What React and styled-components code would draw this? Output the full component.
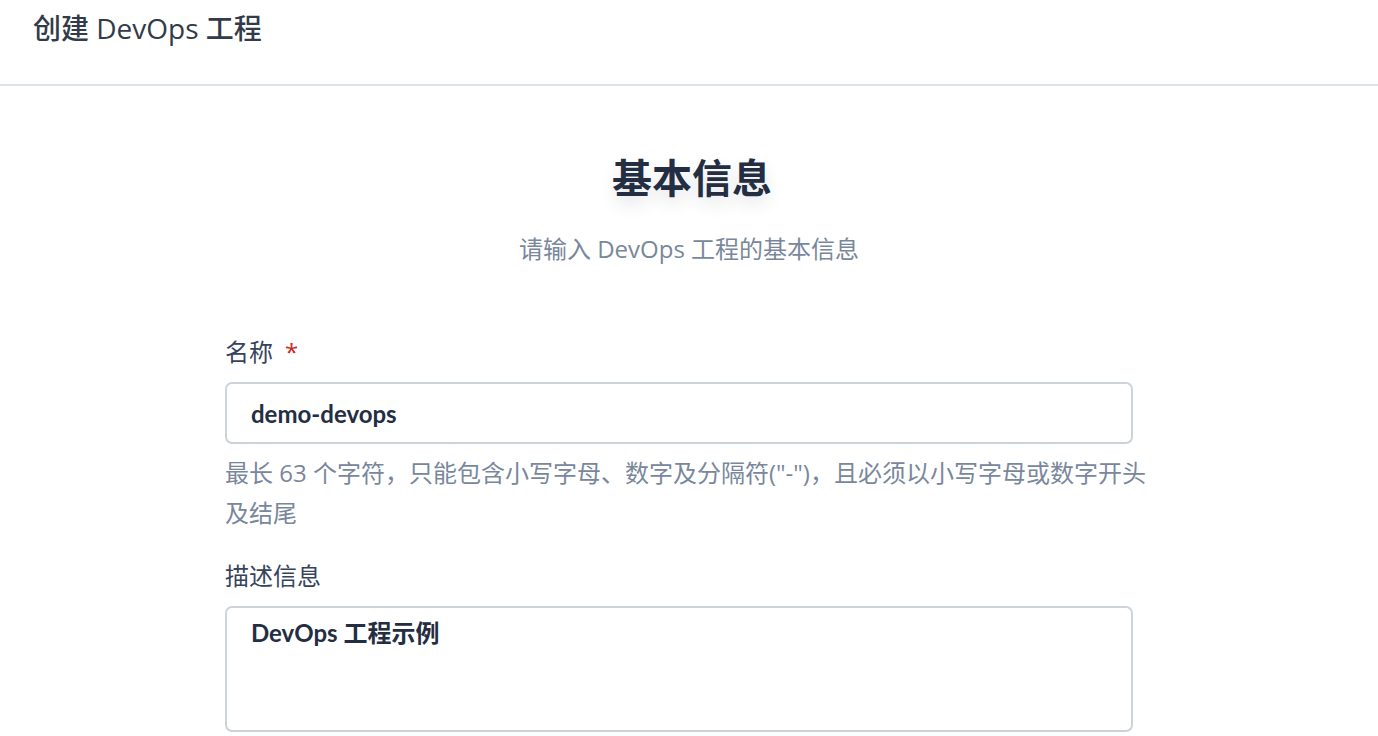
import React from 'react';
import styled, { createGlobalStyle } from 'styled-components';

const textFont = `"Open Sans", "Noto Sans CJK SC", sans-serif`;
const valueFont = `Lato, "Noto Sans CJK SC", sans-serif`;

const GlobalStyle = createGlobalStyle`
	html, body {
		margin: 0;
		padding: 0;
		background: #ffffff;
		font-family: ${textFont};
	}
`;

const Page = styled.div`
	width: 1378px;
	height: 736px;
	overflow: hidden;
	background: #ffffff;
`;

const Header = styled.div`
	height: 86px;
	border-bottom: 2px solid #dde3ea;
	padding: 8px 0 0 33px;
	box-sizing: border-box;
`;

const Title = styled.h1`
	margin: 0;
	font-size: 28px;
	line-height: 40px;
	font-weight: 500;
	color: #323b49;
`;

const Body = styled.div`
	display: flex;
	flex-direction: column;
	align-items: center;
	padding-top: 64px;
`;

const Heading = styled.h2`
	margin: 0 0 0 6px;
	font-size: 40px;
	line-height: 56px;
	font-weight: 700;
	color: #242e42;
	text-shadow: 0 8px 16px rgba(36, 46, 66, 0.12);
`;

const Subtitle = styled.p`
	margin: 27px 0 0;
	font-size: 24px;
	line-height: 32px;
	color: #79879c;
`;

const Form = styled.form`
	width: 928px;
	margin-top: 71px;
	display: flex;
	flex-direction: column;
`;

const Field = styled.div`
	display: flex;
	flex-direction: column;
	margin-bottom: ${(props) => props.gap || 0}px;
`;

const Label = styled.label`
	font-size: 24px;
	line-height: 32px;
	color: #36435c;
	margin-bottom: 14px;
`;

const Required = styled.span`
	color: #ca2621;
	margin-left: 12px;
`;

const Input = styled.input`
	width: 908px;
	height: 62px;
	box-sizing: border-box;
	border: 2px solid #ccd3db;
	border-radius: 7px;
	padding: 0 24px;
	font-family: ${valueFont};
	font-size: 24px;
	font-weight: 700;
	color: #242e42;
	outline: none;
`;

const TextArea = styled.textarea`
	width: 908px;
	height: 126px;
	box-sizing: border-box;
	border: 2px solid #ccd3db;
	border-radius: 7px;
	padding: 9px 24px;
	font-family: ${valueFont};
	font-size: 24px;
	line-height: 32px;
	font-weight: 700;
	color: #242e42;
	resize: none;
	outline: none;
`;

const Hint = styled.p`
	width: 935px;
	margin: 9px 0 0;
	font-size: 24px;
	line-height: 40px;
	color: #79879c;
`;

export default function App() {
	return (
		<Page>
			<GlobalStyle />
			<Header>
				<Title>创建 DevOps 工程</Title>
			</Header>
			<Body>
				<Heading>基本信息</Heading>
				<Subtitle>请输入 DevOps 工程的基本信息</Subtitle>
				<Form>
					<Field gap={27}>
						<Label>
							名称<Required>*</Required>
						</Label>
						<Input defaultValue="demo-devops" />
						<Hint>
							最长 63 个字符，只能包含小写字母、数字及分隔符("-")，且必须以小写字母或数字开头及结尾
						</Hint>
					</Field>
					<Field>
						<Label>描述信息</Label>
						<TextArea defaultValue="DevOps 工程示例" />
					</Field>
				</Form>
			</Body>
		</Page>
	);
}
